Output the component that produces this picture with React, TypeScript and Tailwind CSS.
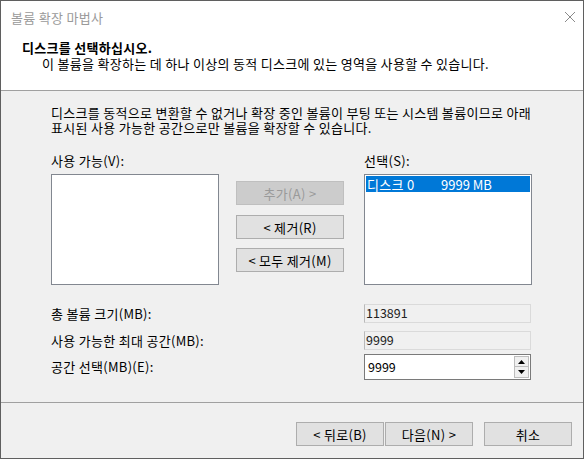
import React from "react";

const font = "font-['Noto_Sans_CJK_KR','Noto_Sans',sans-serif]";

function WinButton({ children, disabled = false, className = "" }: { children: React.ReactNode; disabled?: boolean; className?: string }) {
  return (
    <div
      className={`flex h-[24px] items-center justify-center border text-[13px] leading-none ${
        disabled ? "border-[#bfbfbf] bg-[#cccccc] text-[#9a9a9a]" : "border-[#adadad] bg-[#e1e1e1] text-black"
      } ${className}`}
    >
      {children}
    </div>
  );
}

function ReadOnlyField({ value }: { value: string }) {
  return (
    <div className="flex h-[19px] w-[167px] items-center border border-[#dadada] border-l-[#b9b9b9] bg-[#f0f0f0] pl-[1px] text-[12.5px] leading-none tracking-normal text-[#222]">
      {value}
    </div>
  );
}

function SpinField({ value }: { value: string }) {
  return (
    <div className="flex h-[26px] w-[167px] items-center justify-between border border-[#7a7a7a] bg-white pl-[3px] pr-[1px] text-[12.5px] leading-none tracking-normal">
      <span>{value}</span>
      <div className="flex flex-col">
        <div className="flex h-[11px] w-[15px] items-center justify-center border border-[#bdbdbd] bg-[#f0f0f0]">
          <svg width="7" height="4" viewBox="0 0 7 4"><path d="M3.5 0 L7 4 L0 4 Z" fill="#000" /></svg>
        </div>
        <div className="flex h-[11px] w-[15px] items-center justify-center border border-t-0 border-[#bdbdbd] bg-[#f0f0f0]">
          <svg width="7" height="4" viewBox="0 0 7 4"><path d="M0 0 L7 0 L3.5 4 Z" fill="#000" /></svg>
        </div>
      </div>
    </div>
  );
}

export default function App() {
  return (
    <div className={`flex h-[459px] w-[584px] flex-col border border-[#5f5f5f] bg-[#f0f0f0] tracking-[0.3px] text-black ${font}`}>
      {/* title bar + header */}
      <div className="h-[90px] border-b border-[#a0a0a0] bg-white">
        <div className="flex h-[32px] items-center justify-between pl-[10px] pr-[6px]">
          <span className="text-[13px] leading-none text-[#9a9a9a]">볼륨 확장 마법사</span>
          <svg width="12" height="12" viewBox="0 0 12 12" className="mr-[1px]">
            <path d="M1 1 L11 11 M11 1 L1 11" stroke="#8a8a8a" strokeWidth="1" />
          </svg>
        </div>
        <div className="mt-[7px] pl-[21px] text-[13px] font-bold leading-[16px]">디스크를 선택하십시오.</div>
        <div className="pl-[41px] text-[13px] leading-[16px]">
          이 볼륨을 확장하는 데 하나 이상의 동적 디스크에 있는 영역을 사용할 수 있습니다.
        </div>
      </div>

      {/* body */}
      <div className="h-[312px] border-b border-[#a0a0a0] pl-[50px] pt-[14px] text-[13px]">
        <p className="whitespace-nowrap leading-[15px]">
          디스크를 동적으로 변환할 수 없거나 확장 중인 볼륨이 부팅 또는 시스템 볼륨이므로 아래
          <br />
          표시된 사용 가능한 공간으로만 볼륨을 확장할 수 있습니다.
        </p>

        <div className="mt-[18px] flex">
          <div className="flex w-[168px] flex-col">
            <span className="leading-[16px]">사용 가능(V):</span>
            <div className="mt-[5px] h-[111px] border border-[#828790] bg-white" />
          </div>

          <div className="ml-[17px] flex w-[108px] flex-col pt-[28px]">
            <WinButton disabled>추가(A) &gt;</WinButton>
            <WinButton className="mt-[10px]">&lt; 제거(R)</WinButton>
            <WinButton className="mt-[9px]">&lt; 모두 제거(M)</WinButton>
          </div>

          <div className="ml-[20px] flex w-[168px] flex-col">
            <span className="leading-[16px]">선택(S):</span>
            <div className="mt-[5px] h-[111px] border border-[#828790] bg-white p-[1px]">
              <div className="flex h-[16px] items-center bg-[#0078d7] pl-[1px] leading-none text-white">
                <span className="w-[74px]">디스크 0</span>
                <span className="tracking-normal">9999 MB</span>
              </div>
            </div>
          </div>
        </div>

        <div className="mt-[19px] flex flex-col">
          <div className="flex items-center">
            <span className="w-[313px] leading-[16px]">총 볼륨 크기(MB):</span>
            <ReadOnlyField value="113891" />
          </div>
          <div className="mt-[8px] flex items-center">
            <span className="w-[313px] leading-[16px]">사용 가능한 최대 공간(MB):</span>
            <ReadOnlyField value="9999" />
          </div>
          <div className="mt-[4px] flex items-center">
            <span className="w-[313px] leading-[16px]">공간 선택(MB)(E):</span>
            <SpinField value="9999" />
          </div>
        </div>
      </div>

      {/* footer */}
      <div className="flex flex-1 items-start justify-end pr-[11px] pt-[19px]">
        <WinButton className="w-[88px]">&lt; 뒤로(B)</WinButton>
        <WinButton className="ml-[1px] w-[88px]">다음(N) &gt;</WinButton>
        <WinButton className="ml-[11px] w-[88px]">취소</WinButton>
      </div>
    </div>
  );
}
